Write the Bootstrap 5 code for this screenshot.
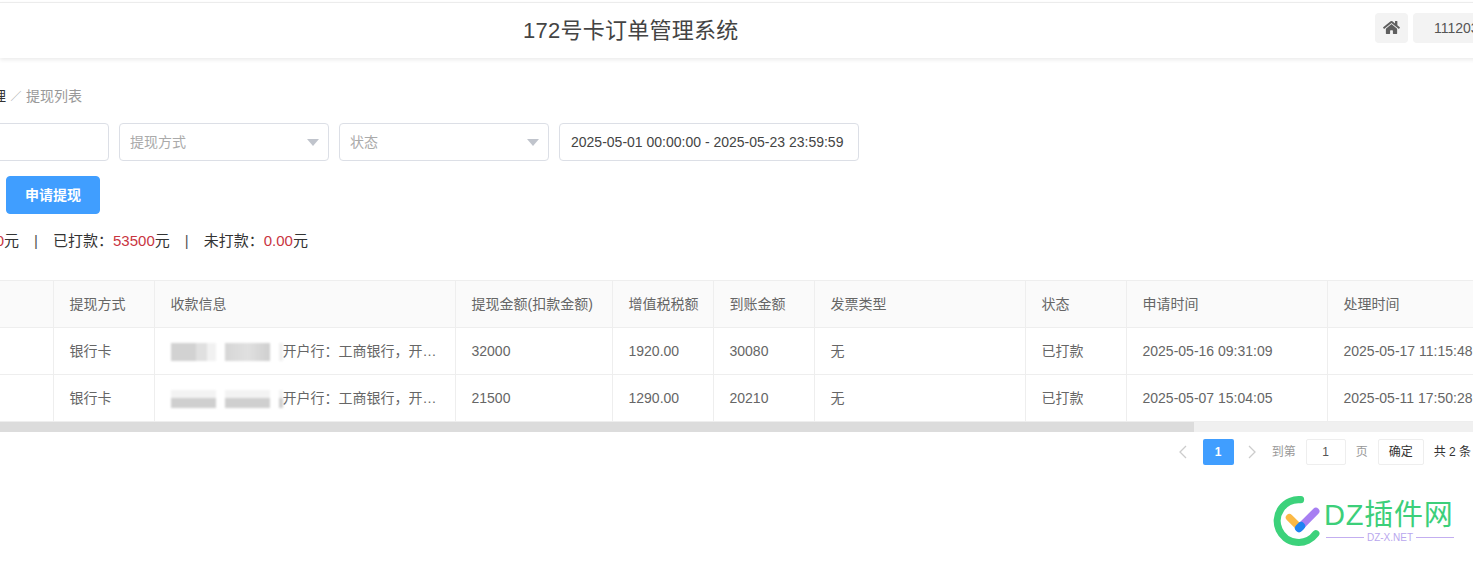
<!DOCTYPE html>
<html lang="zh">
<head>
<meta charset="utf-8">
<title>提现列表</title>
<link rel="stylesheet" href="https://cdn.jsdelivr.net/npm/bootstrap@5.3.0/dist/css/bootstrap.min.css">
<style>
html,body{height:561px;overflow:hidden;background:#fff}
body{font-family:"Liberation Sans","Noto Sans CJK SC",sans-serif;font-size:14px;color:#666;padding-top:2px;position:relative}
.topbar{height:56px;border-top:1px solid #ececec;box-shadow:0 2px 4px rgba(0,0,0,.08);background:#fff;margin-right:-40px}
.sys-title{margin-left:523px;font-size:22px;color:#444;font-weight:400;margin-bottom:0;line-height:56px;letter-spacing:.25px}
.top-acts{gap:5px;margin-bottom:6px}
.home-btn{width:33px;height:30px;background:#f3f3f3;border-radius:4px}
.home-btn svg{width:17px;height:15px;fill:#5f5f5f}
.user-btn{width:100px;height:30px;background:#f3f3f3;border-radius:4px;padding-left:21px;line-height:30px;font-size:14px;color:#555;white-space:nowrap;overflow:hidden}
.crumb{margin:29px 0 0 -50px;height:18px;line-height:18px;color:#333;--bs-breadcrumb-margin-bottom:0;--bs-breadcrumb-divider:'／';--bs-breadcrumb-divider-color:#999;--bs-breadcrumb-item-active-color:#999;--bs-breadcrumb-item-padding-x:4.5px;white-space:nowrap;flex-wrap:nowrap}
.crumb .breadcrumb-item+.breadcrumb-item::before{font-size:11px}
.filters{margin:18px 0 0 -101px;gap:10px}
.filters .form-control,.filters .form-select{height:38px;font-size:14px;border-color:#dcdfe6;border-radius:4px;padding:0 10px;box-shadow:none;flex:none}
.f-a{width:210px}
.filters .form-select{color:#aaa;--bs-form-select-bg-img:none;background-image:url("data:image/svg+xml,%3Csvg xmlns='http://www.w3.org/2000/svg' viewBox='0 0 12 7'%3E%3Cpath fill='%23c0c4cc' d='M0 0h12L6 7z'/%3E%3C/svg%3E");background-size:12px 7px;background-position:right 9px center}
.filters .f-date{width:300px;color:#444;font-size:14px;padding:0 11px}
.apply-btn{margin:15px 0 0 6px;width:94px;height:38px;padding:1px 0 0;font-size:14px;font-weight:700;--bs-btn-bg:#409eff;--bs-btn-border-color:#409eff;--bs-btn-hover-bg:#409eff;--bs-btn-hover-border-color:#409eff;border-radius:4px}
.stat-line{margin:18px 0 0 -118.5px;height:18px;line-height:18px;color:#333;white-space:nowrap;font-size:15px}
.stat-line b{font-weight:400;color:#c9353f}
.stat-sep{margin:0 15px;color:#555}
.grid-wrap{margin-top:30px;overflow:hidden}
.data-tbl{table-layout:fixed;width:1528px;margin:0;font-size:14px;--bs-table-color:#666;--bs-table-border-color:#eee;border-top:1px solid #eee}
.data-tbl th,.data-tbl td{height:47px;padding:1px 15px 0 16px;vertical-align:middle;font-weight:400;white-space:nowrap;border-bottom:1px solid #eee;border-right:1px solid #eee;border-left:0;border-top:0;overflow:hidden}
.data-tbl thead th{background:#fafafa}
.pay-info{display:flex;align-items:center}
.pay-info em{font-style:normal;overflow:hidden;text-overflow:ellipsis;flex:1;min-width:0}
.blur-box{display:block;flex:none;width:45px;height:18px;margin-right:9px;filter:blur(1px);background:linear-gradient(90deg,#d2d2d2 0 55%,#e0e0e0 55% 80%,#f1f1f1 80%)}
.blur-box.alt{background:linear-gradient(90deg,#d6d6d6,#e0e0e0 50%,#cfcfcf)}
.blur-box.low{background:linear-gradient(180deg,#f3f3f3 0 45%,#cfcfcf 45%)}
.blur-end{width:4px;margin-right:0;background:#f0f0f0}
.scroll-track{height:10px;background:#f0f0f0}
.scroll-thumb{height:10px;background:#dcdcdc}
.pager{margin-top:7px;height:26px;padding-right:2px;font-size:12px;color:#999;gap:10px}
.pg-arrow{width:20px;height:26px}
.pg-arrow svg{width:10px;height:14px;fill:none;stroke:#ccc;stroke-width:1.3}
.pg-cur{width:31px;height:26px;background:#409eff;color:#fff;border-radius:2px;font-weight:700;line-height:26px;text-align:center;margin-right:-2px}
.pg-input{width:40px;height:26px;border:1px solid #eee;border-radius:2px;text-align:center;color:#555;line-height:24px}
.pg-go{width:46px;height:26px;border:1px solid #eee;border-radius:2px;text-align:center;color:#333;line-height:24px}
.pg-total{color:#333;white-space:nowrap}
.mark-logo{position:absolute;left:1272px;top:496px;width:186px;height:52px}
.mark-logo svg{position:absolute;left:0;top:0;width:51px;height:51px}
.mark-name{position:absolute;left:52px;top:1px;font-size:29px;line-height:36px;color:#3ccf7a;white-space:nowrap;letter-spacing:.8px}
.mark-sub{position:absolute;left:54px;top:36px;width:128px;font-size:10px;line-height:11px;color:#b9a7ee;gap:3px;white-space:nowrap}
.mark-sub i{flex:1;height:1px;background:#c3aef0}
</style>
</head>
<body>
<header class="topbar d-flex align-items-center justify-content-between">
  <h1 class="sys-title">172号卡订单管理系统</h1>
  <div class="top-acts d-flex align-items-center">
    <div class="home-btn d-flex align-items-center justify-content-center">
      <svg viewBox="0 0 576 512"><path d="M280.37 148.26L96 300.11V464a16 16 0 0 0 16 16l112.06-.29a16 16 0 0 0 15.92-16V368a16 16 0 0 1 16-16h64a16 16 0 0 1 16 16v95.64a16 16 0 0 0 16 16.05L464 480a16 16 0 0 0 16-16V300L295.67 148.26a12.19 12.19 0 0 0-15.3 0zM571.6 251.47L488 182.56V44.05a12 12 0 0 0-12-12h-56a12 12 0 0 0-12 12v72.61L318.47 43a48 48 0 0 0-61 0L4.34 251.47a12 12 0 0 0-1.6 16.9l25.5 31A12 12 0 0 0 45.15 301l235.22-193.74a12.19 12.19 0 0 1 15.3 0L530.9 301a12 12 0 0 0 16.9-1.6l25.5-31a12 12 0 0 0-1.7-16.93z"/></svg>
    </div>
    <div class="user-btn">11120388</div>
  </div>
</header>

<nav aria-label="breadcrumb">
  <ol class="breadcrumb crumb">
    <li class="breadcrumb-item">提现管理</li>
    <li class="breadcrumb-item active">提现列表</li>
  </ol>
</nav>

<div class="filters d-flex">
  <input class="form-control f-a" aria-label="搜索">
  <select class="form-select f-a"><option>提现方式</option></select>
  <select class="form-select f-a"><option>状态</option></select>
  <input class="form-control f-date" value="2025-05-01 00:00:00 - 2025-05-23 23:59:59">
</div>

<button class="btn btn-primary apply-btn d-block">申请提现</button>

<div class="stat-line">总金额：<b>53500.00</b>元<span class="stat-sep">|</span>已打款：<b>53500</b>元<span class="stat-sep">|</span>未打款：<b>0.00</b>元</div>

<div class="grid-wrap">
  <table class="table data-tbl">
    <colgroup>
      <col style="width:53px"><col style="width:101px"><col style="width:301px"><col style="width:157px"><col style="width:101px"><col style="width:101px"><col style="width:211px"><col style="width:101px"><col style="width:201px"><col style="width:201px">
    </colgroup>
    <thead>
      <tr><th></th><th>提现方式</th><th>收款信息</th><th>提现金额(扣款金额)</th><th>增值税税额</th><th>到账金额</th><th>发票类型</th><th>状态</th><th>申请时间</th><th>处理时间</th></tr>
    </thead>
    <tbody>
      <tr><td></td><td>银行卡</td><td><div class="pay-info"><span class="blur-box"></span><span class="blur-box alt"></span><span class="blur-box blur-end"></span><em>开户行：工商银行，开户支行：北京分行</em></div></td><td>32000</td><td>1920.00</td><td>30080</td><td>无</td><td>已打款</td><td>2025-05-16 09:31:09</td><td>2025-05-17 11:15:48</td></tr>
      <tr><td></td><td>银行卡</td><td><div class="pay-info"><span class="blur-box low"></span><span class="blur-box low"></span><span class="blur-box low blur-end"></span><em>开户行：工商银行，开户支行：上海分行</em></div></td><td>21500</td><td>1290.00</td><td>20210</td><td>无</td><td>已打款</td><td>2025-05-07 15:04:05</td><td>2025-05-11 17:50:28</td></tr>
    </tbody>
  </table>
  <div class="scroll-track"><div class="scroll-thumb" style="width:1194px"></div></div>
</div>

<div class="pager d-flex align-items-center justify-content-end">
  <span class="pg-arrow d-flex align-items-center justify-content-center"><svg viewBox="0 0 10 14"><path d="M8 1L2 7l6 6"/></svg></span>
  <span class="pg-cur">1</span>
  <span class="pg-arrow d-flex align-items-center justify-content-center"><svg viewBox="0 0 10 14"><path d="M2 1l6 6-6 6"/></svg></span>
  <span>到第</span>
  <span class="pg-input">1</span>
  <span>页</span>
  <span class="pg-go">确定</span>
  <span class="pg-total">共 2 条</span>
</div>

<div class="mark-logo">
  <svg viewBox="0 0 50 50">
    <path d="M28 3.6A21 21 0 1 0 43 37" fill="none" stroke="#3cd27b" stroke-width="7" stroke-linecap="round"/>
    <path d="M17 21l10 10" stroke="#fbb945" stroke-width="7" stroke-linecap="round"/>
    <path d="M27 31L43 15" stroke="#a77ff2" stroke-width="7" stroke-linecap="round"/>
    <path d="M26.5 31.5l2-2" stroke="#1f83f2" stroke-width="8" stroke-linecap="round"/>
  </svg>
  <div class="mark-name">DZ插件网</div>
  <div class="mark-sub d-flex align-items-center"><i></i><span>DZ-X.NET</span><i></i></div>
</div>
<script src="https://cdn.jsdelivr.net/npm/bootstrap@5.3.0/dist/js/bootstrap.bundle.min.js"></script>
</body>
</html>
